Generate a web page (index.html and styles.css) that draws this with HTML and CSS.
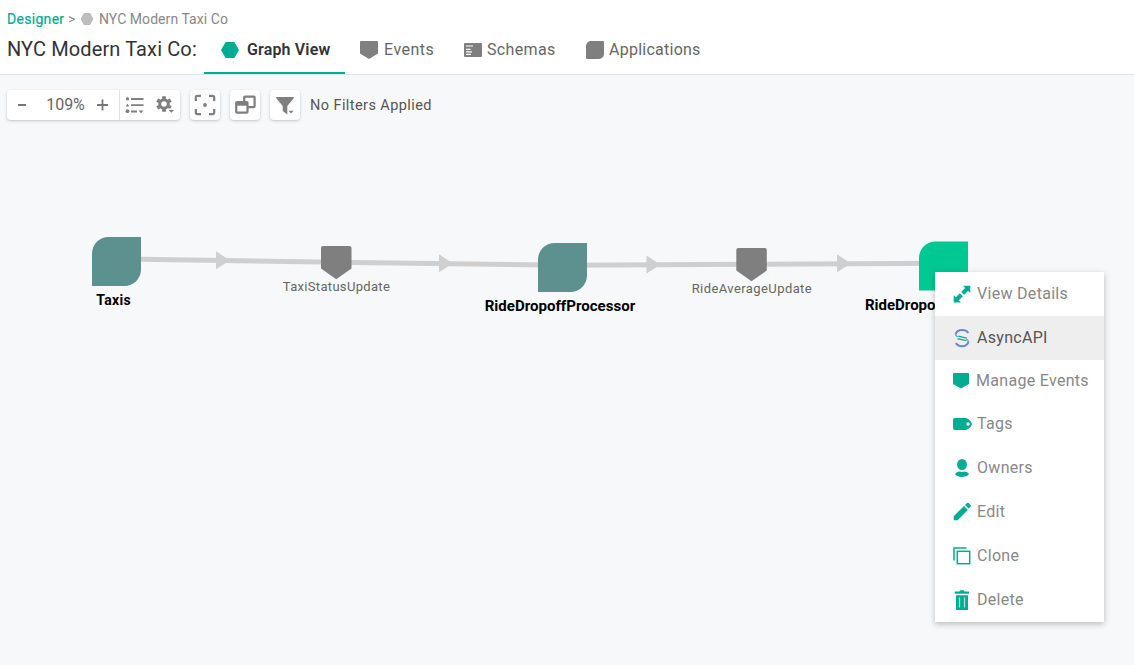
FILE: index.html
```html
<!DOCTYPE html>
<html lang="en">
<head>
<meta charset="utf-8">
<title>NYC Modern Taxi Co</title>
<link rel="stylesheet" href="styles.css">
</head>
<body>
<header class="header">
  <nav class="breadcrumb">
    <a class="crumb-link">Designer</a>
    <span class="crumb-sep">&gt;</span>
    <svg class="crumb-icon" width="14" height="14" viewBox="0 0 14 14"><path d="M3.900 1h6.200L13.400 7l-3.300 6H3.900L.6 7z" fill="#bdbdbd"/></svg>
    <span class="crumb-current">NYC Modern Taxi Co</span>
  </nav>
  <div class="title-row">
    <h1 class="title">NYC Modern Taxi Co:</h1>
    <div class="tab tab-graph active">
      <svg width="20" height="20" viewBox="0 0 20 20"><path d="M5.600 2h8.800L19 10l-4.600 8H5.600L1 10z" fill="#00ad93"/></svg>
      <span>Graph View</span>
    </div>
    <div class="tab tab-events">
      <svg width="20" height="20" viewBox="0 0 20 20"><path d="M2 1h16a1 1 0 0 1 1 1v11.500L10 19 1 13.500V2a1 1 0 0 1 1-1z" fill="#7f7f7f"/></svg>
      <span>Events</span>
    </div>
    <div class="tab tab-schemas">
      <svg width="20" height="20" viewBox="0 0 20 20"><rect x="1" y="3" width="18" height="14" rx="1" fill="#7f7f7f"/><path d="M3 6h7M3 9.300h4.500M3 11.800h6M3 14.300h5" stroke="#fff" stroke-width="1.200"/></svg>
      <span>Schemas</span>
    </div>
    <div class="tab tab-apps">
      <svg width="20" height="20" viewBox="0 0 20 20"><path d="M6 1h12a1 1 0 0 1 1 1v12a5 5 0 0 1-5 5H2a1 1 0 0 1-1-1V6a5 5 0 0 1 5-5z" fill="#7f7f7f"/></svg>
      <span>Applications</span>
    </div>
  </div>
</header>
<main class="canvas">
  <div class="toolbar">
    <div class="tool-group">
      <div class="zoom">
        <svg width="30" height="30" viewBox="0 0 30 30"><path d="M11 15h8" stroke="#777" stroke-width="2"/></svg>
        <span class="zoom-value">109%</span>
        <svg width="30" height="30" viewBox="0 0 30 30"><path d="M9 15h11M14.500 9.500v11" stroke="#777" stroke-width="1.800"/></svg>
      </div>
      <svg width="30" height="30" viewBox="0 0 30 30"><path d="M11 9h12.500M11 15.200h12.500M11 21.500h6" stroke="#7f7f7f" stroke-width="1.800"/><circle cx="7.500" cy="21.200" r="1.900" fill="#7f7f7f"/><path d="M5.700 16.600l1.800-3 1.800 3zM6 10.200V8l1.500-1L9 8v2.200zM18.500 20.500h5l-2.500 2.700z" fill="#7f7f7f"/></svg>
      <svg width="30" height="30" viewBox="0 0 30 30"><g transform="translate(14 14)" fill="none" stroke="#7f7f7f"><circle r="4.300" stroke-width="3"/><path d="M0-5v-2.700M0 5v2.700M4.500-2.600l2.300-1.300M4.500 2.600l2.300 1.300M-4.500-2.600l-2.300-1.300M-4.500 2.600l-2.300 1.300" stroke-width="3.800"/></g><path d="M17.500 18.500h7v2h-7z" fill="#fff"/><path d="M18.700 20h5.300l-2.700 2.800z" fill="#7f7f7f"/></svg>
    </div>
    <div class="tool"><svg width="30" height="30" viewBox="0 0 30 30"><path d="M5.800 11V7.500q0-1.700 1.700-1.700H11M19 5.800h3.500q1.700 0 1.700 1.700V11M24.200 19v3.500q0 1.700-1.700 1.700H19M11 24.200H7.500q-1.700 0-1.700-1.700V19" fill="none" stroke="#7f7f7f" stroke-width="2.200"/><circle cx="15" cy="15" r="1.900" fill="#7f7f7f"/></svg></div>
    <div class="tool"><svg width="30" height="30" viewBox="0 0 30 30"><rect x="14.200" y="6.700" width="10.400" height="10.400" rx=".8" fill="#fff" stroke="#7f7f7f" stroke-width="2.200"/><rect x="6.200" y="12.200" width="11.300" height="10.400" rx=".8" fill="#fff" stroke="#7f7f7f" stroke-width="2.200"/><path d="M6.200 12.200h11.300v3.500H6.200z" fill="#7f7f7f"/></svg></div>
    <div class="tool"><svg width="30" height="30" viewBox="0 0 30 30"><path d="M6.300 7h17.400v1.200L17.300 16v8.500l-4.600-3.500v-5L6.300 8.200z" fill="#7f7f7f"/><path d="M18.500 20.800h5.200L21 23.600z" fill="#7f7f7f"/></svg></div>
    <span class="filter-status">No Filters Applied</span>
  </div>

  <svg class="graph" width="1134" height="545" viewBox="0 120 1134 545">
    <g stroke="#cfcfcf" stroke-width="5">
      <path d="M140 259.300L336 262.200 563 265.200 751 264.200 943 263.300" fill="none"/>
    </g>
    <g fill="#cfcfcf">
      <path d="M216 251.300v18l14-8.800zM439 254.300v18l14-8.800zM646.500 255.500v18l14-8.800zM837 254.300v18l14-8.800z"/>
    </g>
    <g fill="#5d9190">
      <path d="M108.500 237H141v32.500A16.500 16.500 0 0 1 124.500 286H92v-32.500A16.500 16.500 0 0 1 108.500 237z"/>
      <path d="M554.500 243H587v32.500A16.500 16.500 0 0 1 570.500 292H538v-32.500A16.500 16.500 0 0 1 554.500 243z"/>
    </g>
    <path d="M935.500 241.500H968V274a16.500 16.500 0 0 1-16.500 16.500H919V258a16.500 16.500 0 0 1 16.500-16.500z" fill="#00c893"/>
    <g fill="#7f7f7f">
      <path id="event" d="M323 246h26.500a2 2 0 0 1 2 2v20.500L336.200 279.300 321 268.500V248a2 2 0 0 1 2-2z"/>
      <use href="#event" x="415.300" y="2"/>
    </g>
    <g class="app-label">
      <text x="96.300" y="305" textLength="34.500">Taxis</text>
      <text x="484.700" y="311" textLength="150.500" lengthAdjust="spacingAndGlyphs">RideDropoffProcessor</text>
      <text x="865" y="310" textLength="70.500" lengthAdjust="spacingAndGlyphs">RideDropo</text>
    </g>
    <g class="event-label">
      <text x="282.800" y="291" textLength="107">TaxiStatusUpdate</text>
      <text x="691.700" y="293" textLength="120">RideAverageUpdate</text>
    </g>
  </svg>
</main>

<div class="menu">
  <div class="item item-view">
    <svg width="20" height="20" viewBox="0 0 20 20"><path d="M18.300 1.700v7.300l-7.300-7.300zM1.700 18.500v-7.300l7.300 7.300z" fill="#00ad93"/><path d="M15.500 4.500l-4.800 4.900M4.500 15.700l4.800-4.900" stroke="#00ad93" stroke-width="4.200"/></svg>
    <span>View Details</span>
  </div>
  <div class="item item-async">
    <svg width="20" height="20" viewBox="0 0 20 20" fill="none"><path d="M3.600 6.500C4.200 3.500 6.500 2 10.300 2c3 0 4.900 1 6 3M16.500 13.500c-.7 3-2.700 4.700-6.500 4.700-3 0-5-1.200-6-3.200" stroke="#6e86c4" stroke-width="2"/><path d="M3.600 6.300c.2 1.200 1 2 2.200 2.500M16.500 13.700c-.2-1.200-1-2-2.200-2.500" stroke="#6e9ebd" stroke-width="1.400"/><path d="M6.300 8.300l8.700 1.800M5.600 10.800l8.700 1.800" stroke="#18b39b" stroke-width="1.400"/></svg>
    <span>AsyncAPI</span>
  </div>
  <div class="item item-manage">
    <svg width="20" height="20" viewBox="0 0 20 20"><path d="M1.700 2h14.600q.7 0 .7.700V13l-8 4.500L1 13V2.700q0-.7.700-.7z" fill="#00ad93"/></svg>
    <span>Manage Events</span>
  </div>
  <div class="item item-tags">
    <svg width="20" height="20" viewBox="0 0 20 20"><path fill-rule="evenodd" d="M3 4h10.500c3 .3 5.500 3 6.500 6-1 3-3.500 5.700-6.500 6H3a2 2 0 0 1-2-2V6a2 2 0 0 1 2-2zm13 4.300a1.700 1.700 0 1 0 0 3.400 1.700 1.700 0 0 0 0-3.400z" fill="#00ad93"/></svg>
    <span>Tags</span>
  </div>
  <div class="item item-owners">
    <svg width="20" height="20" viewBox="0 0 20 20" fill="#00ad93"><ellipse cx="10" cy="6.500" rx="4.900" ry="5.500"/><path d="M3 16.200c1-1.500 2.700-2.300 4.500-2.600 1.500.6 3.500.6 5 0 1.800.3 3.500 1.100 4.500 2.600-3.500 3.700-10.500 3.700-14 0z"/></svg>
    <span>Owners</span>
  </div>
  <div class="item item-edit">
    <svg width="20" height="20" viewBox="0 0 20 20" fill="#00ad93"><path d="M1.700 18.200v-3.900L12 4l3.900 3.900L5.600 18.200zM13 3l2-2q.8-.6 1.600 0l2 2q.6.8 0 1.600l-2 2z"/></svg>
    <span>Edit</span>
  </div>
  <div class="item item-clone">
    <svg width="20" height="20" viewBox="0 0 20 20" fill="none" stroke="#00ad93" stroke-width="1.500"><path d="M2 14.500V2h12.500"/><rect x="5.300" y="5.300" width="12.400" height="12.400"/></svg>
    <span>Clone</span>
  </div>
  <div class="item item-delete">
    <svg width="20" height="20" viewBox="0 0 20 20"><path d="M2.700 1.500H7.500L8.300.3h3.400l.8 1.200H17v2.200H2.700zM4 5.200h12V20H4z" fill="#00ad93"/><path d="M7.500 7.200v10.300M12.500 7.200v10.300" stroke="#a5e0d7" stroke-width="1.300"/></svg>
    <span>Delete</span>
  </div>
</div>
</body>
</html>
```

FILE: styles.css
```css
* { box-sizing: border-box; }
body {
  margin: 0;
  width: 1134px;
  height: 665px;
  overflow: hidden;
  background: #f7f8fa;
  font-family: Roboto, "Liberation Sans", sans-serif;
  color: #333;
}
svg { display: block; flex: none; }
span, a { white-space: nowrap; }

.header {
  height: 75px;
  background: #fff;
  border-bottom: 1px solid #e1e5e5;
}
.breadcrumb {
  display: flex;
  align-items: center;
  height: 28px;
  padding: 10px 0 0 7px;
  font-size: 14px;
  color: #888;
}
.crumb-link { width: 61px; color: #00ad93; letter-spacing: .3px; -webkit-text-stroke: .2px #00ad93; }
.crumb-sep { width: 12px; }
.crumb-current { margin-left: 5px; letter-spacing: .06px; }

.title-row { display: flex; height: 46px; }
.title {
  width: 204px;
  margin: 0;
  padding: 0 0 4px 7px;
  font-size: 20px;
  font-weight: 400;
  line-height: 42px;
  letter-spacing: .12px;
  white-space: nowrap;
}
.tab {
  display: flex;
  align-items: center;
  gap: 5px;
  padding-bottom: 3px;
  font-size: 16px;
  color: #666;
}
.tab-graph { width: 141px; padding: 0 0 1px 16px; gap: 7px; letter-spacing: .15px; }
.active { color: #333; font-weight: 600; border-bottom: 2px solid #00ad93; }
.tab-events { width: 104px; margin-left: 14px; letter-spacing: .5px; }
.tab-schemas { width: 122px; gap: 4px; letter-spacing: .35px; }
.tab-apps { gap: 4px; letter-spacing: .25px; }

.toolbar { display: flex; align-items: center; gap: 10px; height: 45px; padding: 15px 0 0 7px; }
.tool-group, .tool {
  display: flex;
  height: 30px;
  background: #fff;
  border-radius: 4px;
  box-shadow: 0 1px 3px rgba(0, 0, 0, .22);
}
.tool-group { width: 173px; }
.tool { width: 30px; }
.zoom { display: flex; align-items: center; width: 113px; border-right: 1px solid #e2e2e2; }
.zoom-value { width: 51px; text-align: center; font-size: 16px; color: #666; padding: 0 0 1px 6px; }
.filter-status { font-size: 14.500px; color: #555; letter-spacing: .42px; }

.graph { font-family: Roboto, sans-serif; }
.app-label { font-size: 14px; font-weight: 700; fill: #000; }
.event-label { font-size: 13px; fill: #666; }

.menu {
  position: absolute;
  left: 935px;
  top: 272px;
  width: 169px;
  background: #fff;
  box-shadow: 0 2px 6px rgba(0, 0, 0, .25);
  font-size: 16px;
  color: #888;
}
.item { display: flex; align-items: center; gap: 5px; height: 44px; padding-left: 17px; letter-spacing: .3px; }
.item span { padding-bottom: 1px; }
.item-async { background: #eee; color: #555; }
.item-manage { height: 42px; gap: 4px; }
```
